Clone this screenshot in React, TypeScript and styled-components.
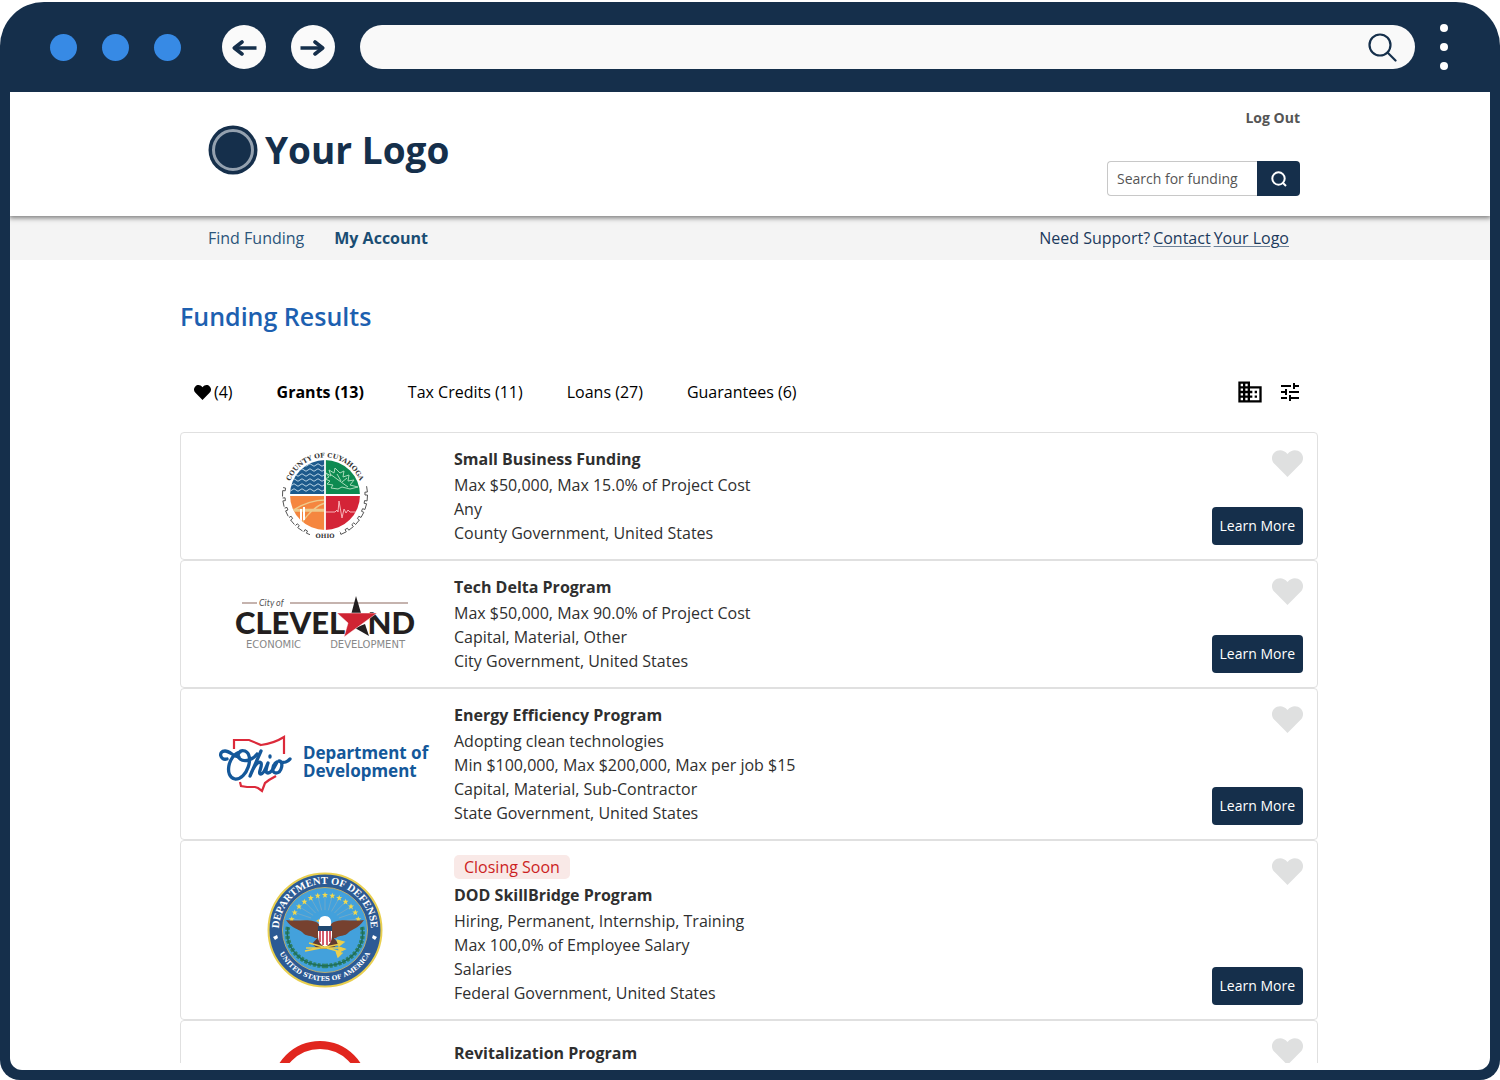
import React from 'react';
import styled, { createGlobalStyle, css } from 'styled-components';

const navy = '#152f4b';

const GlobalStyle = createGlobalStyle`
  *, *::before, *::after { box-sizing: border-box; }
  body {
    margin: 0;
    background: #fff;
    font-family: 'Open Sans', 'Noto Sans', sans-serif;
    font-size: 16px;
    line-height: 24px;
    color: #2f2f2f;
  }
  button, input { font: inherit; }
  h1, h2, p, ul { margin: 0; padding: 0; }
  ul { list-style: none; }
`;

const Screen = styled.div`
  height: 100vh;
  padding-top: 2px;
`;

const BrowserFrame = styled.div`
  display: flex;
  flex-direction: column;
  height: 100%;
  padding: 0 10px 10px;
  background: ${navy};
  border-radius: 44px 44px 20px 20px;
  overflow: hidden;
`;

const BrowserBar = styled.div`
  flex: none;
  display: flex;
  align-items: center;
  height: 90px;
  padding: 0 42px 0 40px;
`;

const WindowDots = styled.div`
  display: flex;
  gap: 25px;
  margin-right: 41px;
`;

const WindowDot = styled.span`
  width: 27px;
  height: 27px;
  border-radius: 50%;
  background: #378ae5;
`;

const RoundButton = styled.button`
  display: grid;
  place-items: center;
  width: 44px;
  height: 44px;
  margin-right: 25px;
  padding: 0;
  border: 0;
  border-radius: 50%;
  background: #fafafa;
  color: ${navy};
`;

const AddressBar = styled.label`
  flex: 1;
  display: flex;
  align-items: center;
  height: 44px;
  padding: 0 18px 0 20px;
  border-radius: 22px;
  background: #f9f9f9;
`;

const AddressInput = styled.input`
  flex: 1;
  min-width: 0;
  border: 0;
  outline: 0;
  background: transparent;
`;

const MenuButton = styled.button`
  display: flex;
  flex-direction: column;
  align-items: center;
  gap: 11px;
  margin-left: 25px;
  padding: 0;
  border: 0;
  background: none;
`;

const MenuDot = styled.span`
  width: 8px;
  height: 8px;
  border-radius: 50%;
  background: #fff;
`;

const Page = styled.div`
  flex: 1;
  min-height: 0;
  padding-bottom: 7px;
  background: #fff;
  border-radius: 0 0 12px 12px;
`;

const Viewport = styled.div`
  height: 100%;
  overflow: hidden;
`;

const Container = styled.div`
  max-width: 1140px;
  margin: 0 auto;
`;

const SiteHeader = styled.header`
  position: relative;
  background: #fff;
  box-shadow: 0 1px 5px 1px rgba(0, 0, 0, 0.5);
`;

const HeaderRow = styled(Container)`
  display: flex;
  justify-content: space-between;
  height: 124px;
  padding: 14px 20px 20px 28px;
`;

const Brand = styled.a`
  display: flex;
  align-items: center;
  align-self: center;
  gap: 7px;
  margin-bottom: 2px;
  color: ${navy};
  font-size: 37px;
  font-weight: 700;
  line-height: 48px;
  text-decoration: none;
`;

const HeaderTools = styled.div`
  display: flex;
  flex-direction: column;
  align-items: flex-end;
  justify-content: space-between;
`;

const LogOut = styled.a`
  color: #555;
  font-size: 14px;
  font-weight: 700;
  text-decoration: none;
`;

const SearchForm = styled.form`
  display: flex;
  height: 35px;
`;

const SearchInput = styled.input`
  width: 150px;
  padding: 0 9px;
  border: 1px solid #c8c8c8;
  border-right: 0;
  border-radius: 4px 0 0 4px;
  font-size: 14px;
  color: #555;
  &::placeholder { color: #555; opacity: 1; }
`;

const SearchButton = styled.button`
  display: grid;
  place-items: center;
  width: 43px;
  padding: 0;
  border: 0;
  border-radius: 0 4px 4px 0;
  background: ${navy};
  color: #fff;
`;

const SiteNav = styled.nav`
  background: #f4f4f4;
`;

const NavRow = styled(Container)`
  display: flex;
  align-items: center;
  height: 44px;
  padding: 0 31px 0 28px;
`;

const NavLink = styled.a<{ $active?: boolean }>`
  margin-right: 30px;
  color: ${({ $active }) => ($active ? '#1a4d73' : '#2c557b')};
  font-weight: ${({ $active }) => ($active ? 700 : 400)};
  text-decoration: none;
`;

const Support = styled.p`
  display: flex;
  gap: 3px;
  margin-left: auto;
  color: #1c3a5c;
`;

const SupportLink = styled.a`
  display: flex;
  gap: 3px;
  color: inherit;
  text-decoration: underline;
  text-decoration-thickness: 1px;
  text-decoration-color: #6c8198;
  text-underline-offset: 2px;
`;

const Main = styled(Container)`
  padding-right: 2px;
`;

const PageTitle = styled.h1`
  padding-top: 39px;
  color: #1d60b0;
  font-size: 25px;
  font-weight: 600;
  line-height: 34px;
`;

const Toolbar = styled.div`
  display: flex;
  align-items: center;
  height: 32px;
  margin: 43px 0 24px;
  padding: 0 16px 0 14px;
`;

const TabList = styled.div`
  display: flex;
  gap: 44px;
`;

const Tab = styled.button<{ $active?: boolean }>`
  display: flex;
  align-items: center;
  gap: 3px;
  padding: 0;
  border: 0;
  background: none;
  color: #000;
  font-weight: ${({ $active }) => ($active ? 700 : 400)};
`;

const ViewTools = styled.div`
  display: flex;
  align-items: center;
  gap: 14px;
  margin-left: auto;
`;

const iconButton = css`
  display: flex;
  padding: 0;
  border: 0;
  background: none;
`;

const ToolButton = styled.button`
  ${iconButton}
  color: #000;
`;

const Card = styled.li`
  display: grid;
  grid-template-columns: 259px 1fr auto;
  padding: 14px;
  border: 1px solid #e0e0e0;
  border-radius: 4px;
`;

const LogoCell = styled.div`
  display: grid;
  place-items: center;
`;

const Details = styled.div`
  align-self: center;
  min-height: 98px;
`;

const Badge = styled.span`
  display: inline-block;
  margin-bottom: 4px;
  padding: 0 10px;
  border-radius: 5px;
  background: #f9e9e7;
  color: #cc1f1f;
  vertical-align: top;
`;

const CardTitle = styled.h2`
  margin-bottom: 2px;
  font-size: 16px;
  font-weight: 700;
  line-height: 24px;
`;

const Actions = styled.div`
  display: flex;
  flex-direction: column;
  align-items: flex-end;
  justify-content: space-between;
`;

const FavoriteButton = styled.button`
  ${iconButton}
  padding-top: 3px;
  color: #dfe0e0;
`;

const LearnMore = styled.button`
  height: 38px;
  padding: 0 8px;
  border: 0;
  border-radius: 4px;
  background: ${navy};
  color: #fff;
  font-size: 14px;
`;

const Heart = ({ width, height }: { width: number; height: number }) => (
  <svg width={width} height={height} viewBox="0 0 31 27" fill="currentColor" preserveAspectRatio="none" aria-hidden="true">
    <path d="M15.5 27 2.600 14.100C-.9 10.600-.9 5.800 2.400 2.600 5.800-.8 11.500-.8 15.500 4 19.500-.8 25.200-.8 28.600 2.600 31.900 5.800 31.900 10.600 28.400 14.100Z" />
  </svg>
);

const Arrow = ({ left }: { left?: boolean }) => (
  <svg width="26" height="18" viewBox="0 0 26 18" fill="none" stroke="currentColor" strokeWidth="3.600" aria-hidden="true">
    <path d={left ? 'M25.500 10H3' : 'M.5 10H23'} />
    <path d={left ? 'M11 4 3.300 10 11 16' : 'M15 4 22.700 10 15 16'} strokeLinecap="round" strokeLinejoin="round" />
  </svg>
);

const CuyahogaLogo = () => {
  const pt = (deg: number, r: number) => {
    const a = (deg * Math.PI) / 180;
    return `${(45 + r * Math.cos(a)).toFixed(1)} ${(45 + r * Math.sin(a)).toFixed(1)}`;
  };
  const teeth = Array.from({ length: 13 }, (_, i) => {
    const side = i < 7 ? -12 + i * 12 : 108 + (i - 7) * 14;
    return `M${pt(side, 42.5)}L${pt(side + 8, 42.5)}L${pt(side + 8, 40)}L${pt(side + 12, 40)}L${pt(side + 12, 42.5)}`;
  }).join('');
  return (
    <svg width="90" height="92" viewBox="0 0 90 92" role="img" aria-label="County of Cuyahoga Ohio">
      <defs>
        <clipPath id="cuyahoga-disc"><circle cx="45" cy="45" r="35" /></clipPath>
        <path id="cuyahoga-top" d="M7.500 45a37.500 37.500 0 0 1 75 0" />
      </defs>
      <g clipPath="url(#cuyahoga-disc)">
        <path fill="#1d5a8c" d="M10 10h34.500v34H10z" />
        <path fill="#0d8a50" d="M45.500 10H80v34H45.500z" />
        <path fill="#f5863f" d="M10 46h34.500v35H10z" />
        <path fill="#d42437" d="M45.500 46H80v35H45.500z" />
        {[15, 20, 25, 30, 35, 40].map((y) => (
          <path key={y} d={`M8 ${y}q2 2.500 4 0t4 0 4 0 4 0 4 0 4 0 4 0 4 0 4 0`} fill="none" stroke="#b9d3e4" strokeWidth="1" />
        ))}
        <path d="M10 61h34M10 59.500h34M19 77C26 66 34 56 45 53M10 62C22 54 32 50 45 50" fill="none" stroke="#eec98a" strokeWidth="1.300" />
        <path d="M21 59v16M24 57v13" stroke="#fff" strokeWidth="2" />
        <path d="M46 62h9l2-2 1 2 1-11 3 17 2-9 2 4 2-3 2 2h9" fill="none" stroke="#f7b3b8" strokeWidth="1" />
        <path d="M46 23l5 3-2-6 5 3 1-5 5 5 4-2-1 6 6-2-1 6 6-1-4 5 8 2-8 2-8-2-4 2-7-1 2-3-6-1 3-3-5-2 4-2zM50 24l18 13M57 24l4 7M67 28l-5 4" fill="none" stroke="#a8dbb9" strokeWidth="1" />
      </g>
      <path d="M10 45h70M45 10v70" stroke="#fff" strokeWidth="1.500" />
      <path d={teeth} fill="none" stroke="#555" strokeWidth="1" />
      <path d="M30 82h30v10H30z" fill="#fff" />
      <text fontFamily="'DejaVu Serif', serif" fontSize="6.500" fontWeight="700" fill="#333" textAnchor="middle">
        <textPath href="#cuyahoga-top" startOffset="50%">COUNTY OF CUYAHOGA</textPath>
      </text>
      <text x="45" y="88" fontFamily="'DejaVu Serif', serif" fontSize="6" fontWeight="700" fill="#333" textAnchor="middle">OHIO</text>
    </svg>
  );
};

const ClevelandLogo = () => (
  <svg width="182" height="56" viewBox="0 0 182 56" role="img" aria-label="City of Cleveland Economic Development">
    <path d="M8 7h15M56 7h118" stroke="#b39a94" strokeWidth="1.300" />
    <text x="25" y="10" fontFamily="Lato, sans-serif" fontSize="9" fontStyle="italic" fill="#555">City of</text>
    <g fontFamily="Lato, sans-serif" fontWeight="900" fontSize="31" fill="#231f20">
      <text x="1" y="38">CLEVEL</text>
      <text x="181" y="38" textAnchor="end">ND</text>
    </g>
    <path d="M122 0 127 17H117.500zM131 28 135 40 121 32z" fill="#231f20" />
    <path d="M103 17H143L128 28 110 41 114 27z" fill="#cf2433" stroke="#fff" strokeWidth=".5" />
    <g fontFamily="'DejaVu Sans', sans-serif" fontSize="10" fill="#888">
      <text x="12" y="52">ECONOMIC</text>
      <text x="171" y="52" textAnchor="end">DEVELOPMENT</text>
    </g>
  </svg>
);

const OhioLogo = () => (
  <svg width="212" height="60" viewBox="0 0 212 60" role="img" aria-label="Ohio Department of Development">
    <g fill="none" stroke="#dc2a3a" strokeWidth="2.200">
      <path d="M15 15V6h15l12 5c8-1 15-3 23-8v17" />
      <path d="M21 48l1 4 6 1 8 0 3 1 4 3 3-8 4-3 7-4" />
    </g>
    <g fill="none" stroke="#14589a" strokeWidth="3.300" strokeLinecap="round" strokeLinejoin="round">
      <path d="M8 25C1 27-1 17 6 17c5 0 9 6 14 6" />
      <path d="M21 18C9 21 5 43 16 45c12 1 20-24 10-28-6-2-9 5-5 8 5 4 14 0 17-5" />
      <path d="M42 17 31 42c5-13 9-15 11-13 2 3-4 11 0 11 3 0 6-9 7-11-2 6-3 10 0 10 4 0 7-7 9-11-5 3-6 11-1 11 6 0 8-12 3-12 5 3 8 1 11-2M51 22v1" />
    </g>
    <g fontFamily="'Noto Sans', sans-serif" fontWeight="700" fontSize="17" fill="#14589a">
      <text x="84" y="25">Department of</text>
      <text x="84" y="43">Development</text>
    </g>
  </svg>
);

const DefenseSeal = () => (
  <svg width="116" height="116" viewBox="0 0 116 116" role="img" aria-label="Department of Defense, United States of America">
    <defs>
      <path id="seal-top" d="M12 58a46 46 0 0 1 92 0" />
      <path id="seal-bottom" d="M7 58a51 51 0 0 0 102 0" />
    </defs>
    <circle cx="58" cy="58" r="56.500" fill="#2c5a94" stroke="#e9cf4f" strokeWidth="2" />
    <circle cx="58" cy="58" r="42.500" fill="#43a1dc" stroke="#b9ad70" strokeWidth="1" />
    {Array.from({ length: 13 }, (_, i) => {
      const a = ((-162 + i * 12) * Math.PI) / 180;
      const x = 58 + Math.cos(a) * 35;
      const y = 58 + Math.sin(a) * 35;
      return (
        <g key={i}>
          <path d={`M${58 + Math.cos(a) * 16} ${54 + Math.sin(a) * 16}L${x} ${y}`} stroke="#78aac4" strokeWidth=".8" />
          <path transform={`translate(${x} ${y})`} d="M0-3 .8-1H3L1.200.5 2 2.800 0 1.500-2 2.800-1.200.5-3-1H-.8z" fill="#f3d94c" />
        </g>
      );
    })}
    <path d="M21 55c-4 18 10 38 37 39M95 55c4 18-10 38-37 39" fill="none" stroke="#2f8265" strokeWidth="4.500" strokeDasharray="3 1.500" />
    <path d="M21 55c-4 18 10 38 37 39M95 55c4 18-10 38-37 39" fill="none" stroke="#1d6d5b" strokeWidth="1.500" />
    <path d="M19 48c14 2 27-3 34 5h10c7-8 20-3 34-5-6 9-12 9-15 12-4 5-10 3-13 6H48c-4-3-9-1-13-6-3-3-10-3-16-12z" fill="#76412f" />
    <path d="M45 72l7-8 5 8h3l5-8 7 8-8 5H51z" fill="#633b30" />
    <path d="M52 53c-1-5 1-9 6-9 4 0 7 3 6 9l-3 5h-7z" fill="#fff" />
    <path d="m52 47-3 2 3 1z" fill="#edc844" />
    <path d="M51 55h14v8c0 7-3 10-7 12-4-2-7-5-7-12z" fill="#fff" />
    <path d="M53 59v11M56 59v14M60 59v14M63 59v11" stroke="#c73549" strokeWidth="1.600" />
    <path d="M51 54h14v5H51z" fill="#20486f" />
    <path d="M38 79l36-7M42 71l32 9M39 76h36M70 68l7 2-5 4zM72 75l6 2-6 3zM69 79l6 2-4 4z" fill="#edcf4b" stroke="#edcf4b" strokeWidth="1.300" />
    <g fontWeight="700" fill="#fff" textAnchor="middle">
      <text fontFamily="'Liberation Serif', serif" fontSize="10.500"><textPath href="#seal-top" startOffset="50%">DEPARTMENT OF DEFENSE</textPath></text>
      <text fontFamily="'DejaVu Serif', serif" fontSize="6.500"><textPath href="#seal-bottom" startOffset="50%">UNITED STATES OF AMERICA</textPath></text>
    </g>
    <path d="M6 65l4-2 1 3-3 2zM110 65l-4-2-1 3 3 2z" fill="#fff" />
  </svg>
);

const RedRing = () => (
  <svg width="110" height="110" viewBox="0 0 110 110" role="img" aria-label="Revitalization Program logo">
    <circle cx="50" cy="54" r="44" fill="none" stroke="#e1261e" strokeWidth="8" />
  </svg>
);

type Program = { title: string; badge?: string; Logo: () => React.JSX.Element; lines: string[] };

const programs: Program[] = [
  { title: 'Small Business Funding', Logo: CuyahogaLogo, lines: ['Max $50,000, Max 15.0% of Project Cost', 'Any', 'County Government, United States'] },
  { title: 'Tech Delta Program', Logo: ClevelandLogo, lines: ['Max $50,000, Max 90.0% of Project Cost', 'Capital, Material, Other', 'City Government, United States'] },
  { title: 'Energy Efficiency Program', Logo: OhioLogo, lines: ['Adopting clean technologies', 'Min $100,000, Max $200,000, Max per job $15', 'Capital, Material, Sub-Contractor', 'State Government, United States'] },
  { title: 'DOD SkillBridge Program', badge: 'Closing Soon', Logo: DefenseSeal, lines: ['Hiring, Permanent, Internship, Training', 'Max 100,0% of Employee Salary', 'Salaries', 'Federal Government, United States'] },
  { title: 'Revitalization Program', Logo: RedRing, lines: [] },
];

export default function App() {
  return (
    <Screen>
      <GlobalStyle />
      <BrowserFrame>
        <BrowserBar>
          <WindowDots><WindowDot /><WindowDot /><WindowDot /></WindowDots>
          <RoundButton type="button" aria-label="Back"><Arrow left /></RoundButton>
          <RoundButton type="button" aria-label="Forward"><Arrow /></RoundButton>
          <AddressBar>
            <AddressInput type="text" aria-label="Address" />
            <svg width="29" height="29" viewBox="0 0 29 29" fill="none" stroke={navy} strokeWidth="2.200" strokeLinecap="round" aria-hidden="true">
              <circle cx="12" cy="12" r="10.500" /><path d="m19.500 19.500 8 8" />
            </svg>
          </AddressBar>
          <MenuButton type="button" aria-label="Menu"><MenuDot /><MenuDot /><MenuDot /></MenuButton>
        </BrowserBar>
        <Page>
          <Viewport>
            <SiteHeader>
              <HeaderRow>
                <Brand href="#home">
                  <svg width="50" height="50" viewBox="0 0 50 50" aria-hidden="true">
                    <circle cx="25" cy="25" r="24.500" fill={navy} />
                    <circle cx="25" cy="25" r="19.500" fill="none" stroke="#94a1af" strokeWidth="3" />
                  </svg>
                  Your Logo
                </Brand>
                <HeaderTools>
                  <LogOut href="#logout">Log Out</LogOut>
                  <SearchForm role="search">
                    <SearchInput type="text" placeholder="Search for funding" aria-label="Search for funding" />
                    <SearchButton type="button" aria-label="Search">
                      <svg width="16" height="16" viewBox="0 0 16 16" fill="none" stroke="currentColor" strokeWidth="2" aria-hidden="true">
                        <circle cx="7.500" cy="7.500" r="6.200" /><path d="m11.500 11.500 3.500 3.500" />
                      </svg>
                    </SearchButton>
                  </SearchForm>
                </HeaderTools>
              </HeaderRow>
            </SiteHeader>
            <SiteNav>
              <NavRow>
                <NavLink href="#find">Find Funding</NavLink>
                <NavLink href="#account" $active>My Account</NavLink>
                <Support>
                  <span>Need Support?</span>
                  <SupportLink href="#contact"><span>Contact</span> <span>Your Logo</span></SupportLink>
                </Support>
              </NavRow>
            </SiteNav>
            <Main as="main">
              <PageTitle>Funding Results</PageTitle>
              <Toolbar>
                <TabList>
                  <Tab type="button" aria-label="Favorites (4)"><Heart width={17} height={15} />(4)</Tab>
                  <Tab type="button" $active>Grants (13)</Tab>
                  <Tab type="button">Tax Credits (11)</Tab>
                  <Tab type="button">Loans (27)</Tab>
                  <Tab type="button">Guarantees (6)</Tab>
                </TabList>
                <ViewTools>
                  <ToolButton type="button" aria-label="Organizations">
                    <svg width="28" height="28" viewBox="0 0 24 24" fill="currentColor" aria-hidden="true">
                      <path d="M12 7V3H2v18h20V7H12zM6 19H4v-2h2v2zm0-4H4v-2h2v2zm0-4H4V9h2v2zm0-4H4V5h2v2zm4 12H8v-2h2v2zm0-4H8v-2h2v2zm0-4H8V9h2v2zm0-4H8V5h2v2zm10 12h-8v-2h2v-2h-2v-2h2v-2h-2V9h8v10zm-2-8h-2v2h2v-2zm0 4h-2v2h2v-2z" />
                    </svg>
                  </ToolButton>
                  <ToolButton type="button" aria-label="Filters">
                    <svg width="24" height="24" viewBox="0 0 24 24" fill="currentColor" aria-hidden="true">
                      <path d="M3 17v2h6v-2H3zM3 5v2h10V5H3zm10 16v-2h8v-2h-8v-2h-2v6h2zM7 9v2H3v2h4v2h2V9H7zm14 4v-2H11v2h10zm-6-4h2V7h4V5h-4V3h-2v6z" />
                    </svg>
                  </ToolButton>
                </ViewTools>
              </Toolbar>
              <ul>
                {programs.map(({ title, badge, Logo, lines }) => (
                  <Card key={title}>
                    <LogoCell><Logo /></LogoCell>
                    <Details>
                      {badge && <Badge>{badge}</Badge>}
                      <CardTitle>{title}</CardTitle>
                      {lines.map((line) => <p key={line}>{line}</p>)}
                    </Details>
                    <Actions>
                      <FavoriteButton type="button" aria-label={`Save ${title}`}><Heart width={31} height={27} /></FavoriteButton>
                      <LearnMore type="button">Learn More</LearnMore>
                    </Actions>
                  </Card>
                ))}
              </ul>
            </Main>
          </Viewport>
        </Page>
      </BrowserFrame>
    </Screen>
  );
}
